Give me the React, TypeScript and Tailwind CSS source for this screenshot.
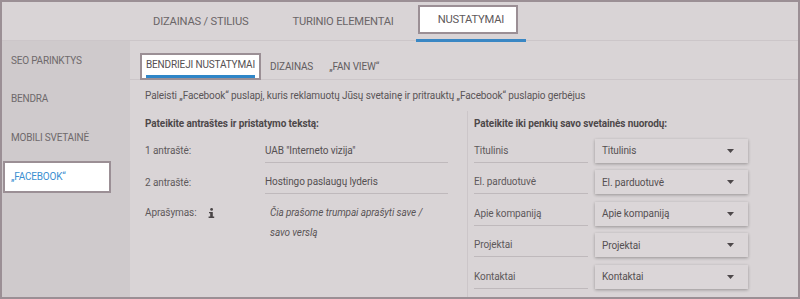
import React from 'react';

const topTabs = ['DIZAINAS / STILIUS', 'TURINIO ELEMENTAI', 'NUSTATYMAI'];
const sideItems = ['SEO PARINKTYS', 'BENDRA', 'MOBILI SVETAINĖ', '„FACEBOOK“'];
const links = ['Titulinis', 'El. parduotuvė', 'Apie kompaniją', 'Projektai', 'Kontaktai'];

const Caret = () => (
  <svg width="7" height="4" viewBox="0 0 7 4" className="shrink-0">
    <polygon points="0,0 7,0 3.5,4" fill="#4d484a" />
  </svg>
);

const InfoIcon = () => (
  <svg width="7" height="10" viewBox="0 0 7 10" className="ml-[12px]">
    <circle cx="3.6" cy="1.4" r="1.4" fill="#4a4547" />
    <path d="M1 4 H4.8 V8.6 H6.2 V10 H0.6 V8.6 H2.2 V5.3 H1 Z" fill="#4a4547" />
  </svg>
);

export default function App() {
  return (
    <div className="w-[800px] h-[299px] border-2 border-[#9b8f95] bg-[#d9d4d6] flex flex-col overflow-hidden font-['Roboto',sans-serif] text-[#5e595b]">
      {/* top tabs */}
      <div className="h-[39px] shrink-0 border-b border-[#ccc6c9] flex pl-[129px]">
        {topTabs.map((t, i) => (
          <div
            key={t}
            className={`relative h-[40px] -mb-[1px] flex items-center px-[22px] text-[11.2px] tracking-[-0.2px] ${
              i === 2 ? 'border-b-[3px] border-[#3a87c4]' : ''
            }`}
          >
            {i === 2 && (
              <span className="absolute left-[2px] right-[8px] top-[3px] h-[29px] bg-white border-2 border-[#9b8f95]" />
            )}
            <span className={`relative ${i === 2 ? 'text-[#5e595b]' : 'text-[#6a6567]'}`}>{t}</span>
          </div>
        ))}
      </div>

      <div className="flex flex-1 min-h-0">
        {/* sidebar */}
        <div className="w-[128px] shrink-0 bg-[#cfcacc] flex flex-col">
          {sideItems.map((s, i) => (
            <div key={s} className="h-[38.5px] flex items-center text-[10px] tracking-[-0.2px]">
              {i === 3 ? (
                <div className="ml-[1px] w-[108px] h-[32px] mt-[2px] bg-white border-2 border-[#9b8f95] flex items-center pl-[6px] text-[#3b8fd1]">
                  {s}
                </div>
              ) : (
                <span className="pl-[9px] text-[#6e696b]">{s}</span>
              )}
            </div>
          ))}
        </div>

        {/* content */}
        <div className="flex-1 flex flex-col min-w-0">
          <div className="h-[39px] shrink-0 border-b border-[#ccc6c9] flex items-end pl-[10px] text-[10px] tracking-[-0.15px]">
            <div className="h-[27px] -mb-[1px] bg-white border-2 border-[#9b8f95] flex items-end px-[4px]">
              <span className="border-b-[3px] border-[#2f86c8] pb-[2px] text-[#555052] leading-[16px]">BENDRIEJI NUSTATYMAI</span>
            </div>
            <span className="ml-[9px] mb-[4px] leading-[16px] text-[#625d5f]">DIZAINAS</span>
            <span className="ml-[16px] mb-[4px] leading-[16px] text-[#625d5f]">„FAN VIEW“</span>
          </div>

          <p className="mt-[8px] pl-[15px] text-[10px] tracking-[-0.1px] leading-[16px] text-[#5a5557]">
            Paleisti „Facebook“ puslapį, kuris reklamuotų Jūsų svetainę ir pritrauktų „Facebook“ puslapio gerbėjus
          </p>

          <div className="flex flex-1 mt-[7px] pl-[15px] text-[10px] tracking-[-0.1px]">
            {/* left column */}
            <div className="w-[322px] shrink-0 pr-[19px]">
              <div className="h-[24px] flex items-center font-bold text-[#4d484a]">Pateikite antraštes ir pristatymo tekstą:</div>
              {['UAB "Interneto vizija"', 'Hostingo paslaugų lyderis'].map((v, i) => (
                <div key={v} className="h-[31.5px] flex items-center">
                  <span className="w-[120px] shrink-0">{i + 1} antraštė:</span>
                  <div className="flex-1 h-[24px] border-b border-[#bfb9bc] flex items-center text-[#555052]">{v}</div>
                </div>
              ))}
              <div className="flex pt-[5px] leading-[20px]">
                <div className="w-[125px] shrink-0 flex items-center h-[20px]">
                  <span>Aprašymas:</span>
                  <InfoIcon />
                </div>
                <div className="italic text-[#5a5557]">
                  Čia prašome trumpai aprašyti save /<br />savo verslą
                </div>
              </div>
            </div>

            {/* right column */}
            <div className="flex-1 border-l border-[#ccc6c9] pl-[6px]">
              <div className="h-[24px] flex items-center font-bold text-[#4d484a]">Pateikite iki penkių savo svetainės nuorodų:</div>
              {links.map((l) => (
                <div key={l} className="h-[31.5px] flex items-center">
                  <div className="w-[114px] h-[24px] border-b border-[#bfb9bc] flex items-center">{l}</div>
                  <div className="ml-[7px] w-[153px] h-[24px] bg-[#dbd6d8] shadow-[0_1px_3px_rgba(0,0,0,0.3)] flex items-center justify-between pl-[7px] pr-[14px] text-[#555052]">
                    <span>{l}</span>
                    <Caret />
                  </div>
                </div>
              ))}
            </div>
          </div>
        </div>
      </div>
    </div>
  );
}
